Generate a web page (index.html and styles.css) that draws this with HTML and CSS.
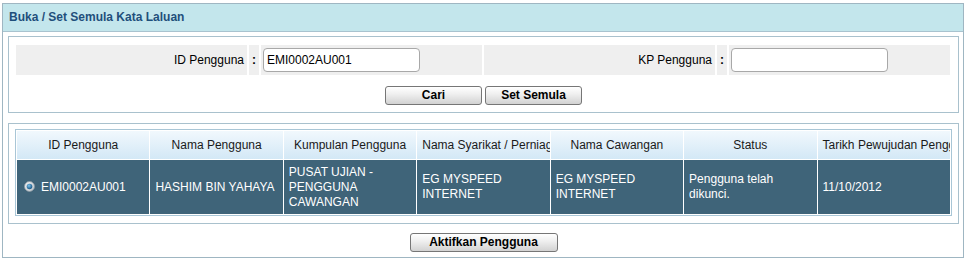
FILE: index.html
```html
<!DOCTYPE html>
<html>
<head>
<meta charset="utf-8">
<link rel="stylesheet" href="styles.css">
</head>
<body>
<div class="panel">
  <div class="panel-head">Buka / Set Semula Kata Laluan</div>
  <div class="panel-body">
    <div class="box search">
      <div class="form-grid">
        <div class="cell label">ID Pengguna</div>
        <div class="cell colon">:</div>
        <div class="cell field"><div class="input">EMI0002AU001</div></div>
        <div class="cell label">KP Pengguna</div>
        <div class="cell colon">:</div>
        <div class="cell field"><div class="input"></div></div>
      </div>
      <div class="actions first">
        <button class="btn btn-sm">Cari</button>
        <button class="btn btn-sm">Set Semula</button>
      </div>
    </div>
    <div class="box results">
      <table class="grid">
        <thead>
          <tr>
            <th>ID Pengguna</th>
            <th>Nama Pengguna</th>
            <th>Kumpulan Pengguna</th>
            <th>Nama Syarikat / Perniagaan</th>
            <th>Nama Cawangan</th>
            <th>Status</th>
            <th>Tarikh Pewujudan Pengguna</th>
          </tr>
        </thead>
        <tbody>
          <tr>
            <td class="idcell"><span class="radio"><svg width="11" height="11" viewBox="0 0 11 11"><defs><radialGradient id="dot" cx="40%" cy="35%" r="60%"><stop offset="0" stop-color="#7fc2ea"/><stop offset="1" stop-color="#1d5f8e"/></radialGradient><linearGradient id="ring" x1="0" y1="0" x2="1" y2="1"><stop offset="0" stop-color="#f4f4f4"/><stop offset="1" stop-color="#b9c2c8"/></linearGradient></defs><circle cx="5.5" cy="5.5" r="5" fill="url(#ring)" stroke="#8a98a2" stroke-width="0.8"/><circle cx="5.5" cy="5.5" r="2.8" fill="url(#dot)"/></svg></span>EMI0002AU001</td>
            <td>HASHIM BIN YAHAYA</td>
            <td>PUSAT UJIAN -<br>PENGGUNA<br>CAWANGAN</td>
            <td>EG MYSPEED<br>INTERNET</td>
            <td>EG MYSPEED<br>INTERNET</td>
            <td>Pengguna telah<br>dikunci.</td>
            <td>11/10/2012</td>
          </tr>
        </tbody>
      </table>
    </div>
    <div class="actions last">
      <button class="btn btn-lg">Aktifkan Pengguna</button>
    </div>
  </div>
</div>
</body>
</html>
```

FILE: styles.css
```css
* { box-sizing: border-box; }
html, body { margin: 0; padding: 0; background: #ffffff; }
body {
  font-family: "Liberation Sans", Arial, sans-serif;
  font-size: 12px;
  color: #000;
}
.panel {
  margin: 3px 0 0 2px;
  width: 962px;
  height: 255px;
  border: 1px solid #9fb6c2;
  background: #fff;
}
.panel-head {
  height: 28px;
  background: #c3e6ec;
  border-bottom: 1px solid #a9c3cf;
  color: #1f4f7b;
  font-weight: bold;
  font-size: 12px;
  line-height: 27px;
  padding-left: 6px;
}
.panel-body {
  padding: 4px 4px 0 5px;
}
.box {
  width: 951px;
  border: 1px solid #a9c1cd;
}
.search {
  height: 77px;
  padding: 8px 0 0 7px;
}
.form-grid {
  display: grid;
  grid-template-columns: 231px 10px 221px 231px 10px 221px;
  column-gap: 2px;
  height: 30px;
}
.cell {
  background: #efefef;
  display: flex;
  align-items: center;
}
.label { justify-content: flex-end; padding-right: 3px; }
.colon { justify-content: center; font-weight: bold; }
.field { padding-left: 2px; }
.input {
  width: 157px;
  height: 24px;
  border: 1px solid #a8a8a8;
  border-radius: 4px;
  background: #fff;
  padding: 0 3px;
  line-height: 22px;
}
.actions {
  display: flex;
  justify-content: center;
  gap: 3px;
}
.actions.first { margin-top: 11px; padding-right: 7px; }
.actions.last { margin-top: 9px; }
.btn {
  height: 19px;
  border: 1px solid #767676;
  border-radius: 3px;
  background: linear-gradient(#ffffff 0%, #f0f0f0 40%, #d2d2d2 100%);
  font-family: "Liberation Sans", Arial, sans-serif;
  font-size: 12px;
  font-weight: bold;
  color: #000;
  padding: 0;
  line-height: 17px;
}
.btn-sm { width: 97px; }
.btn-lg { width: 148px; }
.results {
  margin-top: 10px;
  height: 101px;
  padding: 5px 0 0 6px;
}
.grid {
  table-layout: fixed;
  width: 937px;
  border: 1px solid #a9c6d6;
  border-spacing: 1px;
  background: #fff;
}
.grid th {
  height: 28px;
  background: linear-gradient(#f1f8fd, #d3e8f6);
  font-weight: normal;
  color: #1a1a1a;
  white-space: nowrap;
  overflow: hidden;
  text-align: center;
  padding: 0 5px;
}
.grid td {
  height: 54px;
  background: #3f6479;
  color: #fff;
  line-height: 15px;
  padding: 0 5px;
  vertical-align: middle;
}
.grid td.idcell { padding-left: 7px; }
.radio {
  display: inline-block;
  width: 11px;
  height: 11px;
  margin-right: 6px;
  vertical-align: -1px;
}
.radio svg { display: block; }
```
